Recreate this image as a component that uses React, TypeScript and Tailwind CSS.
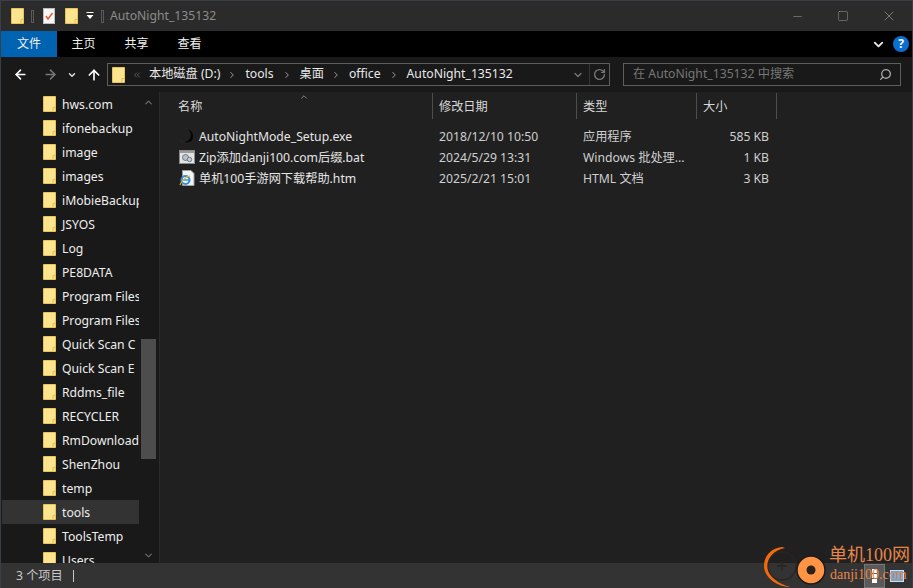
import React from "react";
import { ArrowLeft, ArrowRight, ArrowUp, ChevronDown, ChevronRight, ChevronUp, ChevronsLeft, RotateCw, Search, Minus, Square, X } from "lucide-react";

const font = "font-['Noto_Sans','Noto_Sans_CJK_SC',sans-serif]";

const folders = [
  "hws.com", "ifonebackup", "image", "images", "iMobieBackup", "JSYOS", "Log", "PE8DATA",
  "Program Files", "Program Files", "Quick Scan C", "Quick Scan E", "Rddms_file", "RECYCLER",
  "RmDownload", "ShenZhou", "temp", "tools", "ToolsTemp", "Users",
];

const files = [
  { name: "AutoNightMode_Setup.exe", date: "2018/12/10 10:50", type: "应用程序", size: "585 KB", icon: "moon" },
  { name: "Zip添加danji100.com后缀.bat", date: "2024/5/29 13:31", type: "Windows 批处理...", size: "1 KB", icon: "bat" },
  { name: "单机100手游网下载帮助.htm", date: "2025/2/21 15:01", type: "HTML 文档", size: "3 KB", icon: "ie" },
];

function FolderIcon({ className = "" }: { className?: string }) {
  return (
    <svg viewBox="0 0 13 16" className={`w-[13px] h-[16px] shrink-0 ${className}`}>
      <path d="M0.5 0.5H12.5V15.5H0.5Z" fill="#fde58f" stroke="#e8c35a" />
      <path d="M10 15V11.5H12.5" fill="none" stroke="#e3b94f" />
    </svg>
  );
}

function FileIcon({ kind }: { kind: string }) {
  if (kind === "moon") {
    return (
      <svg viewBox="0 0 16 16" className="w-4 h-4 shrink-0">
        <path d="M7 0.5C11 3 12.5 7.5 10 11C8 13.5 4.5 14 1.5 12.5C4 15.2 9 16 12.3 13.6C15.8 11 15.5 5 12 2.5C10.5 1.3 8.8 0.7 7 0.5Z" fill="#070707" stroke="#383838" strokeWidth="0.5" />
      </svg>
    );
  }
  if (kind === "bat") {
    return (
      <svg viewBox="0 0 16 16" className="w-4 h-4 shrink-0">
        <rect x="0.5" y="1.5" width="15" height="13" fill="#e4e4e4" stroke="#8a8a8a" />
        <rect x="1" y="2" width="14" height="2" fill="#9a9a9a" />
        <circle cx="6.5" cy="8.5" r="3" fill="#b9c2cc" stroke="#6f7780" />
        <circle cx="10.5" cy="10.5" r="2.2" fill="#c6ced6" stroke="#6f7780" />
      </svg>
    );
  }
  return (
    <svg viewBox="0 0 16 16" className="w-4 h-4 shrink-0">
      <path d="M3.5 0.5H12L15 3.5V15.5H3.5Z" fill="#f4f4f4" stroke="#9c9c9c" />
      <circle cx="6.5" cy="10" r="4" fill="none" stroke="#2f8fe0" strokeWidth="2" />
      <path d="M3 10H10" stroke="#2f8fe0" strokeWidth="1.4" />
      <path d="M1 15C2 12 6 6.5 11 6" fill="none" stroke="#f0b323" strokeWidth="1.2" />
    </svg>
  );
}

function Watermark() {
  return (
    <div className="absolute right-0 bottom-0 w-[150px] h-[52px] pointer-events-none">
      <svg viewBox="0 0 66 42" className="absolute left-0 top-[12px] w-[66px] h-[42px] overflow-visible">
        <path d="M19 -1C8 0 1 8 1 18C1 29 14 39 27 39C16 36 5 29 5 18C5 9 11 2 22 0Z" fill="#f26a0f" />
        <circle cx="19" cy="18" r="14" fill="none" stroke="#2a2522" strokeWidth="1.4" />
        <path d="M14 18H24M19 13V23" stroke="#2b2522" strokeWidth="1.4" />
        <circle cx="48" cy="22" r="14" fill="#ff9445" stroke="#1b1b1b" strokeWidth="1.5" />
        <circle cx="48" cy="22" r="4.5" fill="#26211d" />
      </svg>
      <div className="absolute left-[66px] top-[8px] whitespace-nowrap text-[18px] leading-[22px] text-[#e8864a] font-['Liberation_Serif','Noto_Sans_CJK_SC',serif]">单机100网</div>
      <div className="absolute left-[67px] top-[30px] whitespace-nowrap text-[14px] leading-[18px] text-[#e8864a] font-['Liberation_Serif',serif]">danji100.com</div>
    </div>
  );
}

export default function App() {
  return (
    <div className={`relative flex flex-col w-[913px] h-[588px] overflow-hidden bg-[#3a3f45] pt-px px-px ${font}`}>
      {/* Title bar */}
      <div className="flex items-center h-[30px] shrink-0 bg-[#2b2b2b] pl-[10px]">
        <FolderIcon />
        <div className="ml-[7px] w-[3px] h-[13px] border border-[#5a5a5a]" />
        <svg viewBox="0 0 12 16" className="ml-[9px] w-[12px] h-[16px]">
          <rect x="0.5" y="0.5" width="11" height="15" fill="#f7f7f7" stroke="#bdbdbd" />
          <path d="M3 8L5 11L9.5 5" fill="none" stroke="#e8542a" strokeWidth="1.4" />
        </svg>
        <FolderIcon className="ml-[10px]" />
        <svg viewBox="0 0 8 8" className="ml-[8px] w-2 h-2">
          <path d="M0.5 0.5H7.5" stroke="#fff" />
          <path d="M0.5 3H7.5L4 7Z" fill="#fff" />
        </svg>
        <div className="ml-[7px] w-[3px] h-[13px] border border-[#5a5a5a]" />
        <span className="ml-[6px] text-[12.2px] text-[#8c8c8c]">AutoNight_135132</span>
        <div className="ml-auto flex items-center text-[#a0a0a0]">
          <div className="w-[46px] flex justify-center"><Minus size={13} strokeWidth={1} /></div>
          <div className="w-[46px] flex justify-center"><Square size={12} strokeWidth={1} /></div>
          <div className="w-[46px] flex justify-center"><X size={16} strokeWidth={1} /></div>
        </div>
      </div>

      {/* Ribbon tabs */}
      <div className="flex items-center h-[26px] shrink-0 bg-black text-[12px] text-[#f0f0f0]">
        <div className="flex items-center justify-center w-[56px] h-full bg-[#0063b1]">文件</div>
        <div className="ml-[7px] w-[39px] text-center">主页</div>
        <div className="ml-[14px] w-[39px] text-center">共享</div>
        <div className="ml-[14px] w-[39px] text-center">查看</div>
        <ChevronDown size={15} strokeWidth={3} className="ml-auto text-[#e8e8e8]" />
        <div className="ml-[7px] mr-[3px] flex items-center justify-center w-[16px] h-[16px] rounded-full bg-[#0a6fd0] text-[12px] font-bold text-white">?</div>
      </div>

      {/* Address bar */}
      <div className="flex items-center h-[35px] shrink-0 bg-[#191919]">
        <ArrowLeft size={15} strokeWidth={2.5} className="ml-[12px] text-white" />
        <ArrowRight size={15} strokeWidth={2.5} className="ml-[15px] text-[#777]" />
        <ChevronDown size={10} strokeWidth={3.5} className="ml-[9px] text-[#ddd]" />
        <ArrowUp size={16} strokeWidth={2.5} className="ml-[9px] text-white" />
        <div className="ml-[5px] flex items-center w-[503px] h-[23px] border border-[#5e5e5e] text-[12.2px] text-[#e8e8e8]">
          <FolderIcon className="ml-[4px]" />
          <ChevronsLeft size={10} className="ml-[7px] text-[#666]" />
          <span className="ml-[7px]">本地磁盘 (D:)</span>
          <ChevronRight size={10} strokeWidth={2.5} className="ml-[7px] text-[#888]" />
          <span className="ml-[8px]">tools</span>
          <ChevronRight size={10} strokeWidth={2.5} className="ml-[8px] text-[#888]" />
          <span className="ml-[8px]">桌面</span>
          <ChevronRight size={10} strokeWidth={2.5} className="ml-[7px] text-[#888]" />
          <span className="ml-[8px]">office</span>
          <ChevronRight size={10} strokeWidth={2.5} className="ml-[8px] text-[#888]" />
          <span className="ml-[8px]">AutoNight_135132</span>
          <ChevronDown size={12} strokeWidth={2.5} className="ml-auto text-[#777]" />
          <div className="ml-[5px] h-full w-px bg-[#333]" />
          <RotateCw size={13} strokeWidth={2.5} className="mx-[3px] text-[#777]" />
        </div>
        <div className="ml-[13px] flex items-center w-[278px] h-[23px] border border-[#5e5e5e] pl-[9px] pr-[8px] text-[12.2px] text-[#777]">
          <span>在 AutoNight_135132 中搜索</span>
          <Search size={13} strokeWidth={2.5} className="ml-auto scale-x-[-1] text-[#a5a5a5]" />
        </div>
      </div>

      {/* Body */}
      <div className="flex flex-1 min-h-0">
        {/* Nav pane */}
        <div className="relative flex w-[158px] shrink-0 overflow-hidden bg-[#191919]">
          <div className="flex-1 pl-px min-w-0 overflow-hidden">
            {folders.map((f) => (
              <div
                key={f}
                className={`flex items-center h-[24px] pl-[41px] text-[12.2px] text-[#eeeeee] whitespace-nowrap overflow-hidden ${f === "tools" ? "bg-[#333333]" : ""}`}
              >
                <FolderIcon />
                <span className="ml-[6px] pt-[2px]">{f}</span>
              </div>
            ))}
          </div>
          <div className="flex flex-col items-center w-[20px] shrink-0 pt-[5px] pr-[3px] pl-px">
            <ChevronUp size={11} strokeWidth={3} className="text-[#666]" />
            <div className="mt-[231px] w-[15px] h-[120px] shrink-0 bg-[#4d4d4d]" />
            <ChevronDown size={11} strokeWidth={3} className="mt-[91px] text-[#666]" />
          </div>
        </div>
        <div className="w-px shrink-0 bg-[#2b2b2b]" />

        {/* File list */}
        <div className="relative flex-1 min-w-0 bg-[#202020] text-[12.2px]">
          <ChevronUp size={10} strokeWidth={2} className="absolute left-[139px] top-0 text-[#999]" />
          <div className="flex h-[27px] pt-[1px] text-[#d8d8d8]">
            <div className="flex items-center w-[273px] pl-[18px] border-r border-[#4d4d4d]"><span className="pt-[2px]">名称</span></div>
            <div className="flex items-center w-[144px] pl-[6px] border-r border-[#4d4d4d]"><span className="pt-[2px]">修改日期</span></div>
            <div className="flex items-center w-[120px] pl-[6px] border-r border-[#4d4d4d]"><span className="pt-[2px]">类型</span></div>
            <div className="flex items-center w-[80px] pl-[6px] border-r border-[#4d4d4d]"><span className="pt-[2px]">大小</span></div>
          </div>
          <div className="mt-[7px]">
            {files.map((f) => (
              <div key={f.name} className="flex items-center h-[21px] text-[#e6e6e6]">
                <div className="flex items-center w-[273px] pl-[19px]">
                  <FileIcon kind={f.icon} />
                  <span className="ml-[4px] pt-[2px]">{f.name}</span>
                </div>
                <div className="w-[144px] pl-[6px] pt-[2px] text-[#cfcfcf]">{f.date}</div>
                <div className="w-[120px] pl-[6px] pt-[2px] text-[#cfcfcf]">{f.type}</div>
                <div className="w-[72px] pt-[2px] text-right text-[#cfcfcf]">{f.size}</div>
              </div>
            ))}
          </div>
        </div>
      </div>

      {/* Status bar */}
      <div className="flex items-center h-[25px] shrink-0 bg-[#333333] pl-[15px] text-[12.2px] text-[#c8c8c8]">
        <span className="pt-[2px]">3 个项目</span>
        <div className="ml-[10px] w-px h-[12px] bg-[#c8c8c8]" />
        <div className="ml-auto mr-[8px] flex items-center">
          <div className="flex flex-col items-center justify-center gap-px w-[21px] h-[24px] bg-[#5a5a5a] border border-[#777]">
            <div className="w-[5px] h-[4px] bg-white" />
            <div className="w-[5px] h-[4px] bg-white" />
            <div className="w-[5px] h-[4px] bg-white" />
          </div>
          <div className="ml-[5px] w-[14px] h-[12px] border border-[#ddd] bg-[#6aa7d8]" />
        </div>
      </div>
      <Watermark />
    </div>
  );
}
